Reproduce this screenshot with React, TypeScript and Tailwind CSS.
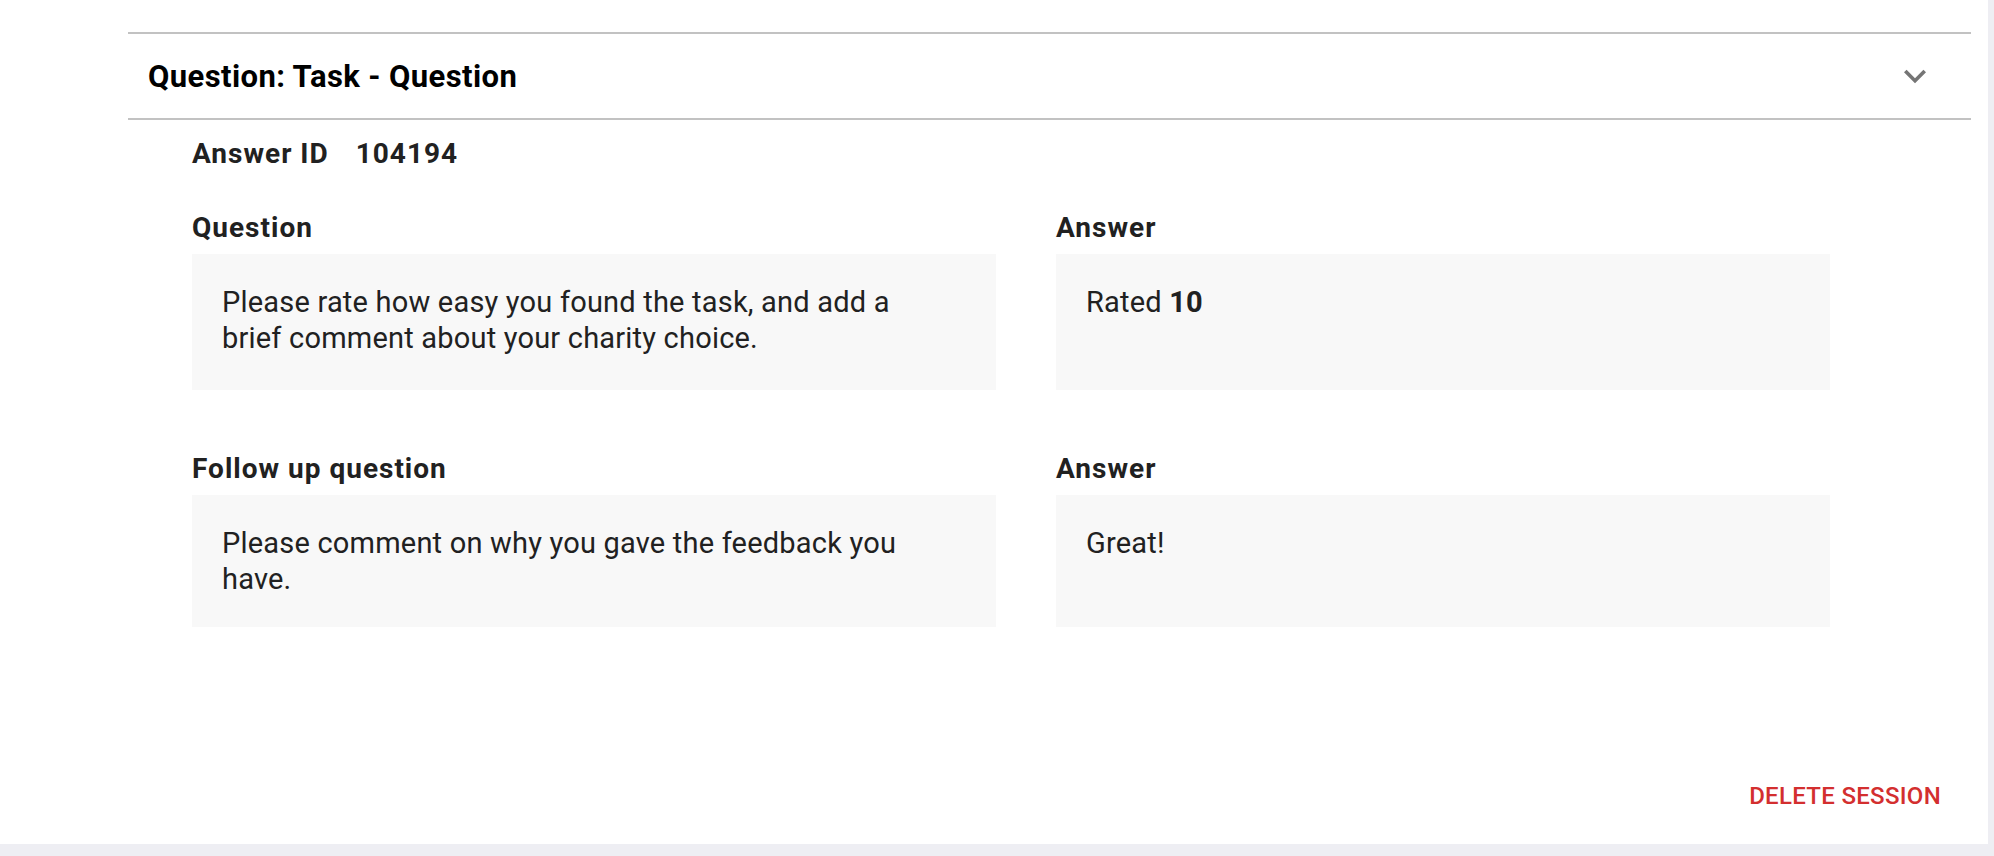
import { useState } from 'react';

// One answered question inside a session review
const rows = [
  {
    label: 'Question',
    question: 'Please rate how easy you found the task, and add a brief comment about your charity choice.',
    answer: (
      <>
        Rated <span className="font-bold">10</span>
      </>
    ),
    minH: 'min-h-[136px]',
  },
  {
    label: 'Follow up question',
    question: 'Please comment on why you gave the feedback you have.',
    answer: <>Great!</>,
    minH: 'min-h-[132px]',
  },
];

function ExpandIcon({ open }: { open: boolean }) {
  return (
    <svg
      viewBox="0 0 24 24"
      className={open ? 'h-[44px] w-[44px] rotate-180 fill-[#757575]' : 'h-[44px] w-[44px] fill-[#757575]'}
    >
      <path d="M16.59 8.59 12 13.17 7.41 8.59 6 10l6 6 6-6z" />
    </svg>
  );
}

export default function App() {
  const [open, setOpen] = useState(true);

  return (
    <div className="flex h-[856px] w-full bg-[#eeeef3] font-[Roboto,sans-serif]">
      <div className="flex h-[844px] w-[1988px] flex-col bg-white pl-[128px] pr-[17px] pt-[32px]">
        {/* Accordion header */}
        <button
          onClick={() => setOpen(!open)}
          className="flex h-[88px] items-center justify-between border-y-2 border-[#c2c2c2] pl-[20px] pr-[34px] text-left"
        >
          <span className="text-[31px] font-bold leading-none tracking-[0.4px] text-black">
            Question: Task - Question
          </span>
          <ExpandIcon open={false} />
        </button>

        {open && (
          <div className="pl-[64px] text-[#212121]">
            <div className="mt-[16px] flex gap-[27px] text-[28px] font-bold leading-[36px] tracking-[1px]">
              <span>Answer ID</span>
              <span>104194</span>
            </div>

            <div className="mt-[38px] flex flex-col gap-[61px]">
              {rows.map((row) => (
                <div key={row.label} className="grid grid-cols-[804px_774px] gap-x-[60px]">
                  <div>
                    <div className="text-[28px] font-bold leading-[36px] tracking-[1px]">{row.label}</div>
                    <div
                      className={`mt-[8px] bg-[#f8f8f8] pb-[29px] pl-[30px] pr-[48px] pt-[30px] text-[29px] leading-[36px] tracking-[0.2px] ${row.minH}`}
                    >
                      {row.question}
                    </div>
                  </div>
                  <div>
                    <div className="text-[28px] font-bold leading-[36px] tracking-[1px]">Answer</div>
                    <div
                      className={`mt-[8px] bg-[#f8f8f8] pb-[29px] pl-[30px] pr-[48px] pt-[30px] text-[29px] leading-[36px] tracking-[0.2px] ${row.minH}`}
                    >
                      {row.answer}
                    </div>
                  </div>
                </div>
              ))}
            </div>
          </div>
        )}

        <div className="mt-auto flex justify-end pb-[22px] pr-[16px]">
          <button className="px-[14px] py-[8px] text-[24px] font-medium uppercase leading-[36px] tracking-[0.3px] text-[#d32f2f]">
            Delete session
          </button>
        </div>
      </div>
    </div>
  );
}
